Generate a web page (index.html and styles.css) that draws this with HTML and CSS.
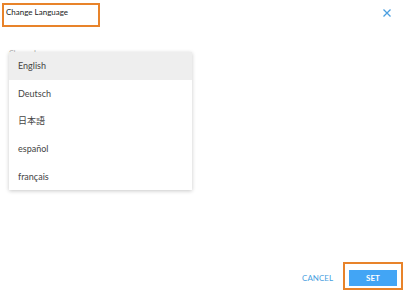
FILE: index.html
```html
<!DOCTYPE html>
<html>
<head>
<meta charset="utf-8">
<link rel="stylesheet" href="styles.css">
</head>
<body>
<div class="dialog">
  <div class="header">
    <div class="title">Change Language</div>
    <button class="close" aria-label="Close">
      <svg width="8" height="8" viewBox="0 0 8 8"><path d="M0.5 0.5L7.5 7.5M7.5 0.5L0.5 7.5" stroke="#4a9fe0" stroke-width="1.3" fill="none"/></svg>
    </button>
  </div>
  <div class="content">
    <div class="field-label">Change Language</div>
    <ul class="menu">
      <li class="item active">English</li>
      <li class="item">Deutsch</li>
      <li class="item">日本語</li>
      <li class="item">español</li>
      <li class="item">français</li>
    </ul>
  </div>
  <div class="footer">
    <button class="cancel">CANCEL</button>
    <div class="set-wrap"><button class="set">SET</button></div>
  </div>
</div>
</body>
</html>
```
FILE: styles.css
```css
html, body {
  margin: 0;
  padding: 0;
  background: #fff;
}
body {
  font-family: Lato, "Noto Sans CJK JP", sans-serif;
  width: 405px;
  height: 300px;
  overflow: hidden;
}
.dialog {
  height: 300px;
  display: flex;
  flex-direction: column;
  box-sizing: border-box;
}
.header {
  display: flex;
  justify-content: space-between;
  align-items: flex-start;
}
.title {
  margin: 3px 0 0 2px;
  width: 98px;
  height: 24px;
  box-sizing: border-box;
  border: 2px solid #e8832a;
  padding: 2px 2px 0 2px;
  font-size: 8px;
  line-height: 10px;
  color: #222;
}
.close {
  margin: 9px 14px 0 0;
  padding: 0;
  border: 0;
  background: none;
  width: 8px;
  height: 8px;
  display: flex;
}
.content {
  position: relative;
  flex: 1;
  padding: 22px 0 0 9px;
}
.field-label {
  font-size: 7px;
  line-height: 8px;
  color: #aaa;
}
.menu {
  position: absolute;
  left: 9px;
  top: 25px;
  width: 183px;
  margin: 0;
  padding: 0;
  list-style: none;
  background: #fff;
  box-shadow: 0 1px 4px rgba(0, 0, 0, 0.22);
}
.item {
  height: 27.6px;
  display: flex;
  align-items: center;
  padding-left: 9px;
  font-size: 9px;
  color: #444;
}
.item.active {
  background: #eeeeee;
}
.footer {
  display: flex;
  justify-content: flex-end;
  align-items: center;
  padding: 0 2px 10px 0;
  gap: 10px;
}
.cancel {
  border: 0;
  background: none;
  padding: 0;
  font-family: Lato, sans-serif;
  font-size: 8px;
  color: #4a9fe0;
  margin-top: 4px;
}
.set-wrap {
  border: 2px solid #e8832a;
  padding: 6px 4px 2px 4px;
  display: flex;
}
.set {
  width: 48px;
  height: 16px;
  border: 0;
  padding: 0;
  background: #42a5f5;
  color: #fff;
  font-family: Lato, sans-serif;
  font-weight: bold;
  font-size: 8px;
}
```
